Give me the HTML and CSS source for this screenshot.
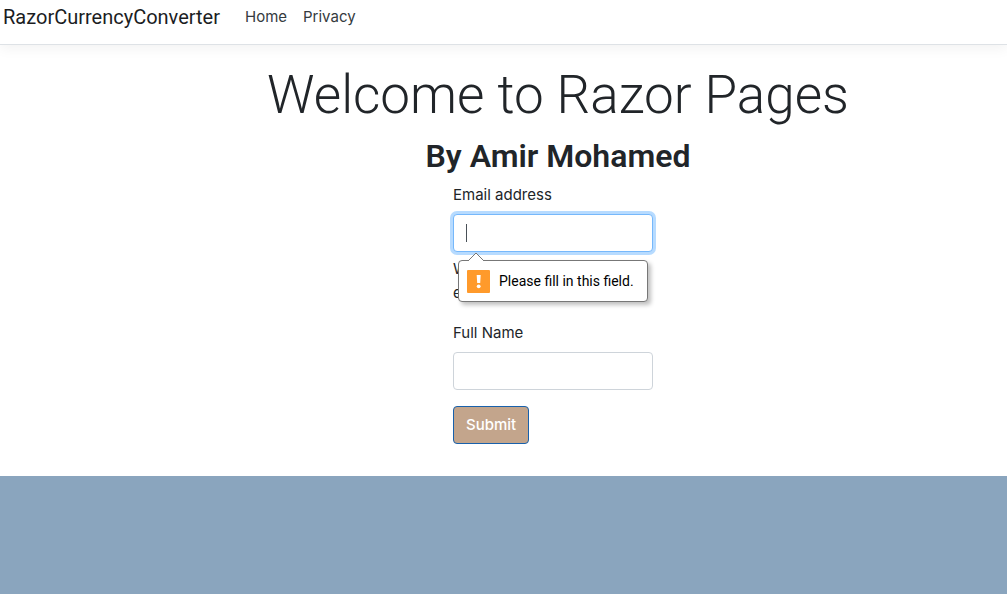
FILE: index.html
```html
<!DOCTYPE html>
<html lang="en">
<head>
<meta charset="utf-8">
<meta name="viewport" content="width=device-width, initial-scale=1">
<title>Home page - RazorCurrencyConverter</title>
<link rel="stylesheet" href="styles.css">
</head>
<body>
<header class="site-header">
  <nav class="navbar">
    <a class="navbar-brand" href="#">RazorCurrencyConverter</a>
    <a class="nav-link" href="#">Home</a>
    <a class="nav-link" href="#">Privacy</a>
  </nav>
</header>
<main class="content">
  <h1 class="display">Welcome to Razor Pages</h1>
  <h2 class="author">By Amir Mohamed</h2>
  <form class="contact-form" novalidate>
    <div class="form-group">
      <label class="form-label" for="email">Email address</label>
      <div class="field">
        <input class="form-control form-control-active" id="email" type="email" aria-describedby="email-help" required>
        <span class="caret"></span>
        <div class="validation-bubble" role="alert">
          <svg class="bubble-arrow" width="18" height="10" viewBox="0 0 18 10" aria-hidden="true"><path d="M0 10L1 9L9 1L17 9L18 10Z" fill="#fff"/><path d="M1 9L9 1L17 9" fill="none" stroke="#777"/></svg>
          <svg class="bubble-icon" width="23" height="23" viewBox="0 0 23 23" aria-hidden="true"><rect width="23" height="23" rx="1" fill="#ff9a2b"/><path d="M9.7 5h4l-.5 8h-3z" fill="#fff"/><circle cx="11.7" cy="16.3" r="1.9" fill="#fff"/></svg>
          <span>Please fill in this field.</span>
        </div>
      </div>
      <div class="form-text" id="email-help">We'll never share your email with anyone else.</div>
    </div>
    <div class="form-group">
      <label class="form-label" for="name">Full Name</label>
      <input class="form-control" id="name" type="text">
    </div>
    <button class="submit-button" type="submit">Submit</button>
  </form>
</main>
</body>
</html>
```
FILE: styles.css
```css
* {
  box-sizing: border-box;
}

body {
  margin: 0;
  min-height: 100vh;
  background: #8aa5be;
  color: #212529;
  font-family: Inter, "Liberation Sans", sans-serif;
  font-size: 15px;
  line-height: 24px;
}

.site-header {
  position: relative;
  background: #fff;
  border-bottom: 1px solid #dee2e6;
  box-shadow: 0 4px 12px rgba(0, 0, 0, 0.05);
}

.navbar {
  display: flex;
  align-items: center;
  gap: 16px;
  padding: 1px 3px 11px;
}

.navbar-brand {
  margin-right: 9px;
  color: #1b1d1f;
  font-family: Roboto, Inter, sans-serif;
  font-size: 20px;
  line-height: 32px;
  text-decoration: none;
}

.nav-link {
  color: #343a40;
  text-decoration: none;
}

.content {
  display: flex;
  flex-direction: column;
  align-items: center;
  padding: 16px 0 32px 109px;
  background: #fff;
}

.display {
  margin: 0 0 8px;
  font-family: Roboto, Inter, sans-serif;
  font-size: 53px;
  font-weight: 350;
  line-height: 68px;
  white-space: nowrap;
}

.author {
  margin: 0 0 8px;
  font-family: Roboto, Inter, sans-serif;
  font-size: 32px;
  font-weight: 600;
  line-height: 38px;
}

.contact-form {
  width: 200px;
  margin-right: 10px;
}

.form-group {
  margin-bottom: 16px;
}

.form-label {
  display: block;
  margin-bottom: 7px;
}

.field {
  position: relative;
}

.form-control {
  display: block;
  width: 100%;
  height: 38px;
  padding: 6px 12px;
  border: 1px solid #ced4da;
  border-radius: 4px;
  outline: 0;
  background: #fff;
  color: #495057;
  font: inherit;
}

.form-control-active {
  border-color: #76b8fb;
  box-shadow: 0 0 0 3px #b7dbff;
}

.caret {
  position: absolute;
  top: 10px;
  left: 13px;
  width: 1px;
  height: 18px;
  background: #495057;
}

.form-text {
  margin-top: 5px;
  padding-right: 20px;
}

.validation-bubble {
  position: absolute;
  top: 46px;
  left: 5px;
  display: flex;
  align-items: center;
  gap: 9px;
  width: 190px;
  height: 42px;
  padding: 0 8px;
  border: 1px solid #777;
  border-radius: 4px;
  background: #fff;
  box-shadow: 3px 3px 4px rgba(0, 0, 0, 0.25);
  color: #000;
  font-family: Roboto, Inter, sans-serif;
  font-size: 14px;
  white-space: nowrap;
}

.bubble-arrow {
  position: absolute;
  top: -9px;
  left: 8px;
}

.bubble-icon {
  flex: none;
}

.submit-button {
  display: block;
  height: 38px;
  padding: 0 12px;
  border: 1px solid #1861ac;
  border-radius: 4px;
  background: #c3a58c;
  color: #fff;
  font: inherit;
  font-weight: 500;
}
```
